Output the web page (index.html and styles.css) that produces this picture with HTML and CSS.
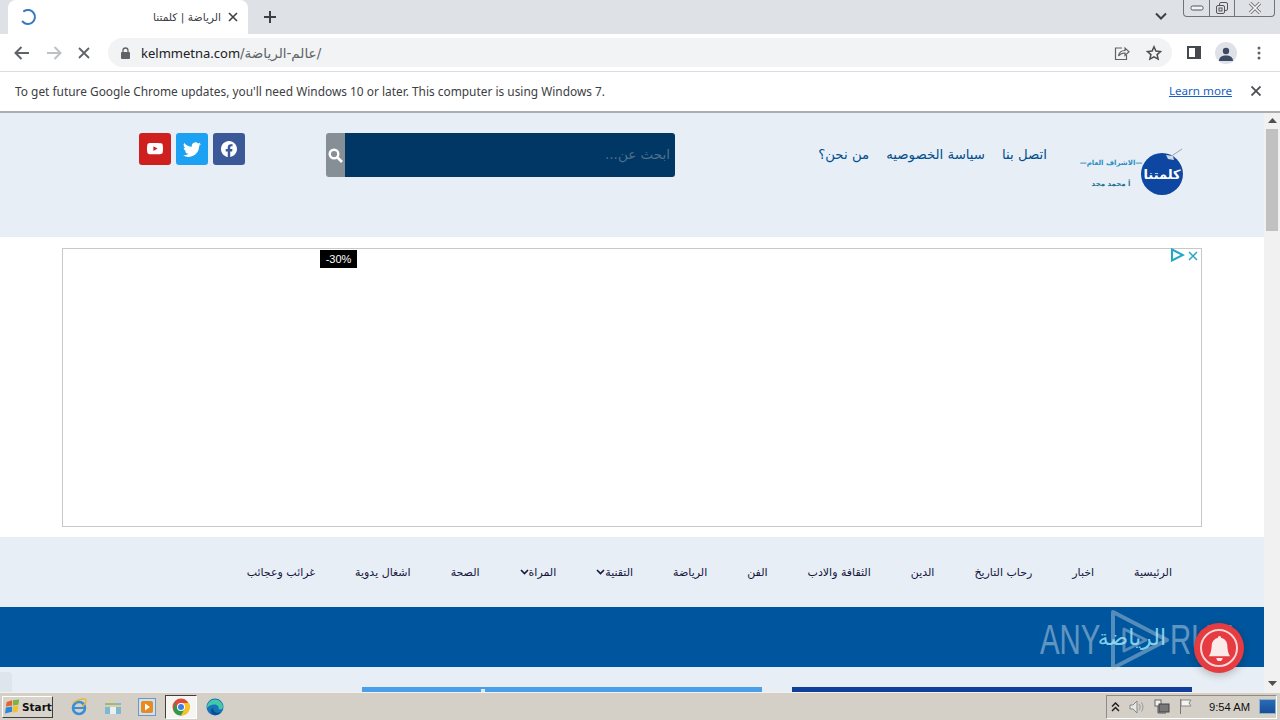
FILE: index.html
```html
<!DOCTYPE html>
<html lang="ar">
<head>
<meta charset="utf-8">
<title>الرياضة | كلمتنا</title>
<link rel="stylesheet" href="styles.css">
</head>
<body>
<div class="browser">
  <div class="tabstrip">
    <div class="tab">
      <svg class="spinner" width="18" height="18" viewBox="0 0 18 18"><path d="M5 3.200A7 7 0 1 1 3.600 13.500" fill="none" stroke="#3b78c4" stroke-width="2" stroke-linecap="round"/></svg>
      <span class="tab-title" dir="rtl">الرياضة | كلمتنا</span>
      <svg class="tab-close" width="10" height="10" viewBox="0 0 10 10"><path d="M1 1l8 8M9 1l-8 8" stroke="#3c4043" stroke-width="1.600"/></svg>
    </div>
    <svg class="newtab" width="12" height="12" viewBox="0 0 12 12"><path d="M6 0v12M0 6h12" stroke="#3c4043" stroke-width="2"/></svg>
    <svg class="tabmenu" width="12" height="8" viewBox="0 0 12 8"><path d="M1 1.500l5 5 5-5" fill="none" stroke="#3c4043" stroke-width="2"/></svg>
    <div class="winctl">
      <span class="winbtn winmin"><svg width="14" height="6" viewBox="0 0 14 6"><rect x="1" y="1" width="12" height="4" rx="1.500" fill="#f3f4f6" stroke="#555"/></svg></span>
      <span class="winbtn winmax"><svg width="14" height="14" viewBox="0 0 14 14"><rect x="4.500" y="1.500" width="8" height="8" rx="1.500" fill="none" stroke="#555"/><rect x="1.500" y="4.500" width="8" height="8" rx="1.500" fill="#dee1e6" stroke="#555"/><rect x="4" y="7" width="3" height="3" fill="none" stroke="#555"/></svg></span>
      <span class="winbtn winclose"><svg width="14" height="12" viewBox="0 0 14 12"><path d="M2 1l10 10M12 1L2 11" stroke="#777" stroke-width="3.400"/><path d="M2 1l10 10M12 1L2 11" fill="none" stroke="#f4f5f7" stroke-width="1.600"/></svg></span>
    </div>
  </div>

  <div class="toolbar">
    <svg class="nav-ico" width="16" height="14" viewBox="0 0 16 14"><path d="M15 7H2M7.500 1L1.500 7l6 6" fill="none" stroke="#5f6368" stroke-width="2"/></svg>
    <svg class="nav-ico" width="16" height="14" viewBox="0 0 16 14"><path d="M1 7h13M8.500 1l6 6-6 6" fill="none" stroke="#bdc1c6" stroke-width="2"/></svg>
    <svg class="nav-ico" width="12" height="12" viewBox="0 0 12 12"><path d="M1 1l10 10M11 1L1 11" stroke="#5f6368" stroke-width="1.800"/></svg>
    <div class="omnibox">
      <svg class="lock" width="9" height="12" viewBox="0 0 9 12"><path d="M2 5V3.500a2.500 2.500 0 0 1 5 0V5" fill="none" stroke="#5f6368" stroke-width="1.300"/><rect y="5" width="9" height="7" rx="1" fill="#5f6368"/></svg>
      <span class="url">kelmmetna.com<span class="url-path">/عالم-الرياضة/</span></span>
      <svg class="share" width="16" height="16" viewBox="0 0 16 16"><path d="M8 3H1.500v11.500h11V10" fill="none" stroke="#5f6368" stroke-width="1.200"/><path d="M4.500 11c.5-3.500 3-5.500 6.500-5.500V3l4 3.700-4 3.700V8c-3 0-5 1-6.500 3z" fill="none" stroke="#5f6368" stroke-width="1.200"/></svg>
      <svg class="star" width="16" height="16" viewBox="0 0 16 16"><path d="M8 1.800l1.900 4.200 4.600.5-3.400 3.100 1 4.500L8 11.800l-4.100 2.300 1-4.500L1.500 6.500l4.600-.5z" fill="none" stroke="#4a4d51" stroke-width="1.500"/></svg>
    </div>
    <div class="tools">
      <svg width="14" height="13" viewBox="0 0 14 13"><path d="M0 0h14v13H0zM2 2v9h6V2z" fill="#45484c" fill-rule="evenodd"/></svg>
      <span class="avatar"><svg width="14" height="14" viewBox="0 0 14 14"><circle cx="7" cy="4" r="3.200" fill="#3c4a63"/><path d="M0 14c0-4 3-5.500 7-5.500s7 1.500 7 5.500z" fill="#3c4a63"/></svg></span>
      <svg width="4" height="14" viewBox="0 0 4 14"><circle cx="2" cy="2" r="1.500" fill="#5f6368"/><circle cx="2" cy="7" r="1.500" fill="#5f6368"/><circle cx="2" cy="12" r="1.500" fill="#5f6368"/></svg>
    </div>
  </div>

  <div class="infobar">
    <span class="info-text">To get future Google Chrome updates, you'll need Windows 10 or later. This computer is using Windows 7.</span>
    <a class="learn">Learn more</a>
    <svg class="info-close" width="10" height="10" viewBox="0 0 10 10"><path d="M.5.5l9 9M9.500.5l-9 9" stroke="#4a4d51" stroke-width="1.800"/></svg>
  </div>

  <div class="viewport">
    <div class="page">
      <header class="site-head">
        <div class="social">
          <a class="soc soc-yt"><svg width="16" height="16" viewBox="0 0 16 16"><path fill="#fff" d="M8.051 1.999h.089c.822.003 4.987.033 6.110.335a2.010 2.010 0 0 1 1.415 1.420c.101.380.172.883.220 1.402l.01.104.022.260.008.104c.065.914.073 1.770.074 1.957v.075c-.001.194-.01 1.108-.082 2.060l-.008.105-.009.104c-.05.572-.124 1.140-.235 1.558a2.007 2.007 0 0 1-1.415 1.420c-1.160.312-5.569.334-6.180.335h-.142c-.309 0-1.587-.006-2.927-.052l-.170-.006-.087-.004-.171-.007-.171-.007c-1.110-.049-2.167-.128-2.654-.260a2.007 2.007 0 0 1-1.415-1.419c-.111-.417-.185-.986-.235-1.558L.09 9.820l-.008-.104A31.400 31.400 0 0 1 0 7.680v-.123c.002-.215.01-.958.064-1.778l.007-.103.003-.052.008-.104.022-.260.01-.104c.048-.519.119-1.023.220-1.402a2.007 2.007 0 0 1 1.415-1.420c.487-.13 1.544-.210 2.654-.260l.170-.007.172-.006.086-.003.171-.007A99.788 99.788 0 0 1 7.858 2h.193zM6.400 5.209v4.818l4.157-2.408L6.400 5.209z"/></svg></a>
          <a class="soc soc-tw"><svg width="18" height="18" viewBox="0 0 16 16"><path fill="#fff" d="M5.026 15c6.038 0 9.341-5.003 9.341-9.334 0-.14 0-.282-.006-.422A6.685 6.685 0 0 0 16 3.542a6.658 6.658 0 0 1-1.889.518 3.301 3.301 0 0 0 1.447-1.817 6.533 6.533 0 0 1-2.087.793A3.286 3.286 0 0 0 7.875 6.030a9.325 9.325 0 0 1-6.767-3.429 3.289 3.289 0 0 0 1.018 4.382A3.323 3.323 0 0 1 .64 6.575v.045a3.288 3.288 0 0 0 2.632 3.218 3.203 3.203 0 0 1-.865.115 3.230 3.230 0 0 1-.614-.057 3.283 3.283 0 0 0 3.067 2.277A6.588 6.588 0 0 1 .78 13.580a6.320 6.320 0 0 1-.78-.045A9.344 9.344 0 0 0 5.026 15z"/></svg></a>
          <a class="soc soc-fb"><svg width="16" height="16" viewBox="0 0 16 16"><path fill="#fff" d="M16 8.049c0-4.446-3.582-8.050-8-8.050C3.580 0-.002 3.603-.002 8.050c0 4.017 2.926 7.347 6.750 7.951v-5.625h-2.030V8.050H6.750V6.275c0-2.017 1.195-3.131 3.022-3.131.876 0 1.791.157 1.791.157v1.980h-1.009c-.993 0-1.303.621-1.303 1.258v1.510h2.218l-.354 2.326H9.250V16c3.824-.604 6.750-3.934 6.750-7.951z"/></svg></a>
        </div>
        <div class="search">
          <span class="search-btn"><svg width="15" height="15" viewBox="0 0 15 15"><circle cx="6" cy="6" r="4.300" fill="none" stroke="#fff" stroke-width="2.400"/><path d="M9.500 9.500l4.500 4.500" stroke="#fff" stroke-width="2.600"/></svg></span>
          <span class="search-input" dir="rtl">ابحث عن...</span>
        </div>
        <nav class="top-links" dir="rtl">
          <a>اتصل بنا</a>
          <a>سياسة الخصوصيه</a>
          <a>من نحن؟</a>
        </nav>
        <div class="logo">
          <div class="logo-lines">
            <span class="logo-super">—الاشراف العام—</span>
            <span class="logo-name" dir="rtl">أ محمد مجد</span>
          </div>
          <div class="logo-disc">كلمتنا<svg class="logo-pen" width="20" height="16" viewBox="0 0 20 16"><path d="M19 1L7 9" stroke="#9aa5b1" stroke-width="1"/><path d="M3 7l7 1 1 4-6-1z" fill="#cfd6de"/></svg></div>
        </div>
      </header>

      <section class="ad-wrap">
        <div class="ad">
          <span class="ad-badge">-30%</span>
          <svg class="ad-play" width="15" height="14" viewBox="0 0 15 14"><path d="M2 1.500l11 5.500-11 5.500z" fill="none" stroke="#20a8c4" stroke-width="2"/></svg>
          <svg class="ad-x" width="10" height="10" viewBox="0 0 10 10"><path d="M1 1l8 8M9 1l-8 8" stroke="#2aa8c8" stroke-width="1.500"/></svg>
        </div>
      </section>

      <nav class="main-nav" dir="rtl">
        <a>الرئيسية</a>
        <a>اخبار</a>
        <a>رحاب التاريخ</a>
        <a>الدين</a>
        <a>الثقافة والادب</a>
        <a>الفن</a>
        <a>الرياضة</a>
        <a class="has-sub">التقنية<svg width="9" height="6" viewBox="0 0 9 6"><path d="M1 1l3.500 3.500L8 1" fill="none" stroke="#14143c" stroke-width="1.600"/></svg></a>
        <a class="has-sub">المراة<svg width="9" height="6" viewBox="0 0 9 6"><path d="M1 1l3.500 3.500L8 1" fill="none" stroke="#14143c" stroke-width="1.600"/></svg></a>
        <a>الصحة</a>
        <a>اشغال يدوية</a>
        <a>غرائب وعجائب</a>
      </nav>

      <div class="band" dir="rtl"><span class="band-title">الرياضة</span></div>

      <div class="cards">
        <div class="card card-light"></div>
        <div class="card card-dark"></div>
      </div>
      <span class="corner-tab"></span>
    </div>

    <div class="scrollbar">
      <svg class="sb-arrow" width="9" height="5" viewBox="0 0 9 5"><path d="M4.500 0L9 5H0z" fill="#505050"/></svg>
      <div class="sb-track"><div class="sb-thumb"></div></div>
      <svg class="sb-arrow" width="9" height="5" viewBox="0 0 9 5"><path d="M0 0h9L4.500 5z" fill="#505050"/></svg>
    </div>

    <div class="watermark">
      <span class="wm-text">ANY</span>
      <svg class="wm-logo" width="60" height="62" viewBox="0 0 60 62"><path d="M3 3L57 31 3 59z" fill="none" stroke="#c9d6e2" stroke-width="4" stroke-linejoin="round"/><path d="M14 20l22 11-22 11z" fill="none" stroke="#c9d6e2" stroke-width="3" stroke-linejoin="round"/></svg>
      <span class="wm-text">RUN</span>
    </div>
    <div class="bell"><span class="bell-ring"><svg width="25" height="27" viewBox="0 0 16 16"><path fill="#fbeaea" d="M8 16a2 2 0 0 0 2-2H6a2 2 0 0 0 2 2zm.995-14.901a1 1 0 1 0-1.990 0A5.002 5.002 0 0 0 3 6c0 1.098-.5 6-2 7h14c-1.500-1-2-5.902-2-7 0-2.420-1.720-4.440-4.005-4.901z"/></svg></span></div>
  </div>

  <div class="taskbar">
    <div class="start">
      <svg width="16" height="15" viewBox="0 0 18 16"><path d="M2 3l6-2v6l-7 1z" fill="#e5642b"/><path d="M9 1l7-1-1 6-6 1z" fill="#7cb342"/><path d="M1 9l7-1v6l-8 2z" fill="#2a88d8"/><path d="M9 8l6-1-1 7-5 1z" fill="#f5c02a"/></svg>
      <span>Start</span>
    </div>
    <div class="quick">
      <span class="ql"><svg width="18" height="18" viewBox="0 0 18 18"><circle cx="9" cy="10" r="6" fill="none" stroke="#3b8dd6" stroke-width="2.600"/><path d="M4 10h10" stroke="#3b8dd6" stroke-width="2"/><path d="M3 5C8 1 15 0 16 2c1 2-2 5-4 7" fill="none" stroke="#e6b530" stroke-width="1.300"/></svg></span>
      <span class="ql"><svg width="18" height="18" viewBox="0 0 18 18"><path d="M1 5h16v11H1z" fill="#7eb8d8"/><path d="M2 3h8l2 2H2z" fill="#efd27a"/><path d="M6 9h6v7H6z" fill="#e8f0f4"/><path d="M1 7h16v2H1z" fill="#e9cf7e"/></svg></span>
      <span class="ql"><svg width="18" height="18" viewBox="0 0 18 18"><rect x=".5" y=".5" width="17" height="17" fill="#cfe0f0" stroke="#6f97bf"/><rect x="3" y="3" width="12" height="12" rx="2" fill="#e88a1e"/><path d="M7 5.500l5 3.500-5 3.500z" fill="#fff"/></svg></span>
      <span class="ql ql-active"><svg width="18" height="18" viewBox="0 0 18 18"><circle cx="9" cy="9" r="8.500" fill="#dd4b3e"/><path d="M9 5h7.900a8.500 8.500 0 0 1-7.900 12.500z" fill="#f6c229"/><path d="M1.700 13.200A8.500 8.500 0 0 0 9 17.500L12.500 11 5.500 11 3 4z" fill="#2d9c4a"/><circle cx="9" cy="9" r="4" fill="#fff"/><circle cx="9" cy="9" r="3" fill="#3f7fe0"/></svg></span>
      <span class="ql"><svg width="18" height="18" viewBox="0 0 18 18"><circle cx="9" cy="9" r="8.500" fill="#1673b8"/><path d="M1 10a8 8 0 0 1 16-1c0 2.500-3 3-4.500 2 1-2-1-4.500-4-4.500C5 6.500 3 8 1 10z" fill="#41c9a8"/><path d="M7 10c0 4 4 6 8 4-2 3-6 4-8.500 2C4 14 5 11 7 10z" fill="#0a4d94"/></svg></span>
    </div>
    <div class="tray">
      <svg width="9" height="10" viewBox="0 0 9 10"><path d="M1 4.500l3.500-3.500L8 4.500M1 9l3.500-3.500L8 9" fill="none" stroke="#222" stroke-width="1.500"/></svg>
      <svg width="16" height="14" viewBox="0 0 16 14"><path d="M1 5h3l4-4v12l-4-4H1z" fill="#e8e8e4" stroke="#888"/><path d="M10 4c1.500 2 1.500 4 0 6M12.500 2.500c2 3 2 6 0 9" fill="none" stroke="#999"/></svg>
      <svg width="16" height="16" viewBox="0 0 16 16"><rect x="1" y="1" width="6" height="6" fill="#f2f2ee" stroke="#666"/><rect x="5" y="5" width="10" height="8" fill="#777" stroke="#444"/><path d="M4 7v7h8" fill="none" stroke="#555"/></svg>
      <svg width="14" height="15" viewBox="0 0 14 15"><path d="M1.500 0v15" stroke="#777"/><path d="M2 1h10l-2 3 2 3H2z" fill="#f4f4f0" stroke="#888"/></svg>
      <span class="clock">9:54 AM</span>
      <span class="desktop"></span>
    </div>
  </div>
</div>
</body>
</html>
```

FILE: styles.css
```css
* { box-sizing: border-box; }
html, body { margin: 0; padding: 0; }
body { width: 1280px; height: 720px; overflow: hidden; font-family: "Noto Sans", "DejaVu Sans", sans-serif; background: #fff; }
a { color: inherit; text-decoration: none; }
svg { display: block; flex: none; }

.browser { display: flex; flex-direction: column; width: 1280px; height: 720px; }

/* tab strip */
.tabstrip { height: 34px; flex: none; background: #dee1e6; display: flex; align-items: flex-start; padding-left: 8px; }
.tab { width: 240px; height: 34px; background: #fff; border-radius: 8px 8px 0 0; display: flex; align-items: center; padding: 0 11px 0 11px; }
.spinner { margin-left: 0; }
.tab-title { margin-left: auto; margin-right: 7px; font-size: 10.700px; color: #3c4043; font-family: "DejaVu Sans", sans-serif; white-space: nowrap; }
.tab-close { margin-right: -1px; }
.newtab { margin: 11px 0 0 16px; }
.tabmenu { margin: 12px 0 0 879px; }
.winctl { margin-left: 16px; display: flex; width: 92px; height: 17px; border: 1px solid #70757c; border-top: 0; border-radius: 0 0 4px 4px; }
.winbtn { display: flex; align-items: center; justify-content: center; border-left: 1px solid #70757c; }
.winmin { width: 25px; border-left: 0; }
.winmax { width: 25px; }
.winclose { flex: 1; }

/* toolbar */
.toolbar { height: 38px; flex: none; background: #fff; border-bottom: 1px solid #dadce0; display: flex; align-items: center; padding: 0 0 0 14px; }
.nav-ico { margin-right: 16px; }
.omnibox { width: 1064px; height: 29px; margin-left: 2px; border-radius: 15px; background: #f1f3f4; display: flex; align-items: center; padding: 0 10px 0 13px; }
.lock { margin-right: 11px; }
.url { font-size: 13px; color: #202124; white-space: nowrap; }
.url-path { color: #5f6368; font-family: "DejaVu Sans", sans-serif; font-size: 13.500px; }
.share { margin-left: auto; margin-right: 16px; }
.tools { display: flex; align-items: center; margin-left: 15px; }
.avatar { width: 22px; height: 22px; border-radius: 50%; background: #dfe1e8; display: flex; align-items: flex-end; justify-content: center; padding-bottom: 3px; margin: 0 0 0 14px; }
.tools > svg:last-child { margin-left: 20px; }

/* info bar */
.infobar { height: 41px; flex: none; background: #fff; border-bottom: 2px solid #a9adb4; display: flex; align-items: center; padding: 0 19px 2px 15px; }
.info-text { font-size: 11.900px; color: #3c4043; white-space: nowrap; }
.learn { margin-left: auto; font-size: 11.600px; color: #1a5fc0; text-decoration: underline; }
.info-close { margin-left: 19px; }

/* viewport */
.viewport { flex: 1; display: flex; position: relative; overflow: hidden; min-height: 0; }
.page { flex: 1; min-width: 0; background: #e8eef5; position: relative; overflow: hidden; font-family: "DejaVu Sans", sans-serif; }
.scrollbar { width: 16px; flex: none; background: #f1f1f1; display: flex; flex-direction: column; align-items: center; padding: 5px 0 6px; }
.sb-track { flex: 1; width: 100%; padding: 6px 2px 0; }
.sb-thumb { height: 102px; background: #c1c1c1; }

/* site header */
.site-head { height: 124px; display: flex; align-items: flex-start; padding: 20px 81px 0 139px; }
.social { display: flex; gap: 5px; }
.soc { width: 32px; height: 32px; border-radius: 3px; display: flex; align-items: center; justify-content: center; }
.soc-yt { background: #cd201f; }
.soc-tw { background: #1da1f2; }
.soc-fb { background: #3b5998; }
.search { margin-left: 81px; width: 349px; height: 44px; display: flex; border-radius: 3px; overflow: hidden; }
.search-btn { width: 19px; background: #868e96; display: flex; align-items: center; justify-content: center; }
.search-input { flex: 1; background: #003764; color: #4f6f8c; font-size: 13.500px; padding: 0 5px; line-height: 42px; }
.top-links { margin-left: auto; margin-top: 14px; display: flex; gap: 17px; font-size: 13.300px; color: #004f8f; white-space: nowrap; }
.logo { margin-left: 34px; margin-top: 16px; display: flex; width: 102px; }
.logo-lines { width: 60px; display: flex; flex-direction: column; align-items: center; padding-top: 10px; }
.logo-super { font-size: 7px; color: #2a8fc4; font-weight: 700; white-space: nowrap; }
.logo-name { font-size: 7px; color: #1f7396; margin-top: 13px; white-space: nowrap; font-weight: 700; }
.logo-disc { width: 42px; height: 42px; margin-top: 4px; border-radius: 50%; background: #0d47a1; color: #fff; font-size: 13px; font-weight: 700; display: flex; align-items: center; justify-content: center; position: relative; white-space: nowrap; }
.logo-pen { position: absolute; top: -5px; right: 0; }

/* ad */
.ad-wrap { height: 300px; background: #fff; padding: 11px 62px 10px; }
.ad { height: 279px; border: 1px solid #c8c8c8; position: relative; }
.ad-badge { position: absolute; left: 257px; top: 1px; width: 37px; height: 18px; background: #000; color: #fff; font: 11px/18px "Liberation Sans", sans-serif; text-align: center; }
.ad-play { position: absolute; right: 16px; top: -1px; }
.ad-x { position: absolute; right: 3px; top: 2px; }

/* main nav */
.main-nav { height: 70px; display: flex; align-items: center; gap: 40px; padding: 0 92px 0 0; font-size: 11px; color: #14143c; white-space: nowrap; }
.has-sub { display: flex; align-items: center; }

/* band */
.band { height: 60px; background: #00569e; padding: 0 98px 0 0; display: flex; align-items: center; }
.band-title { font-size: 22px; color: #7fd0ea; }

/* cards */
.cards { display: flex; justify-content: flex-end; gap: 30px; padding: 20px 72px 0 0; }
.card { width: 400px; height: 20px; position: relative; }
.card-light { background: #4a9fe8; }
.card-light::after { content: ""; position: absolute; left: 119px; top: 2px; width: 4px; height: 3px; background: #dcecf8; }
.card-dark { background: #0f3f9a; }
.corner-tab { position: absolute; left: 0; bottom: 0; width: 12px; height: 20px; background: #dfe5ec; border-radius: 0 4px 0 0; }

/* overlays */
.watermark { position: absolute; left: 1040px; top: 496px; display: flex; align-items: center; height: 62px; pointer-events: none; opacity: .42; }
.wm-text { width: 70px; font: 42px/1 "Liberation Sans", sans-serif; color: #e6edf3; transform: scaleX(.7); transform-origin: left center; white-space: nowrap; }
.wm-logo { margin: 0; }
.bell { position: absolute; left: 1194px; top: 510px; width: 50px; height: 50px; border-radius: 50%; background: #e53b41; box-shadow: 0 2px 8px rgba(0,0,0,.25); display: flex; align-items: center; justify-content: center; }
.bell-ring { width: 38px; height: 38px; border-radius: 50%; border: 2px solid #f5d5d5; display: flex; align-items: center; justify-content: center; }

/* taskbar */
.taskbar { height: 28px; flex: none; background: #d4d0c8; border-top: 1px solid #f4f2ee; display: flex; align-items: center; padding: 0 3px 0 2px; font-family: "Liberation Sans", sans-serif; }
.start { width: 51px; height: 22px; display: flex; align-items: center; gap: 1px; padding-left: 2px; background: #d8d4cc; border: 1px solid; border-color: #fff #404040 #404040 #fff; font: 700 10.500px "DejaVu Sans", sans-serif; color: #111; }
.quick { display: flex; margin-left: 9px; }
.ql { width: 34px; height: 24px; display: flex; align-items: center; justify-content: center; }
.ql-active { width: 32px; margin: 0 1px; background: #f6f5f2; border: 1px solid; border-color: #404040 #fff #fff #404040; }
.tray { margin-left: auto; width: 171px; height: 24px; border: 1px solid; border-color: #8f8c85 #fff #fff #8f8c85; display: flex; align-items: center; padding-left: 4px; gap: 9px; }
.clock { margin-left: 7px; font-size: 11.200px; color: #111; white-space: nowrap; }
.desktop { width: 17px; height: 15px; background: linear-gradient(#2a6cb8, #174f96); border: 1px solid #8fb0cc; }
```
